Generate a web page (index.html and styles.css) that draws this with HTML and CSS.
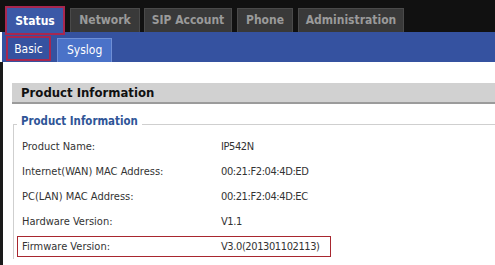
FILE: index.html
```html
<!DOCTYPE html>
<html>
<head>
<meta http-equiv="Content-Type" content="text/html; charset=utf-8">
<title>Status - Basic</title>
<link rel="stylesheet" href="styles.css">
</head>
<body>

<div class="top">
  <a class="tab tab--on">Status</a>
  <a class="tab tab--net">Network</a>
  <a class="tab tab--sip">SIP Account</a>
  <a class="tab tab--phone">Phone</a>
  <a class="tab tab--admin">Administration</a>
</div>

<div class="sub">
  <a class="subtab subtab--on">Basic</a>
  <a class="subtab">Syslog</a>
</div>

<div class="main">
  <p class="main__title">Product Information</p>
  <fieldset class="info">
    <legend class="info__legend">Product Information</legend>
    <div class="info__row"><span class="info__label">Product Name:</span><span class="info__value">IP542N</span></div>
    <div class="info__row"><span class="info__label">Internet(WAN) MAC Address:</span><span class="info__value">00:21:F2:04:4D:ED</span></div>
    <div class="info__row"><span class="info__label">PC(LAN) MAC Address:</span><span class="info__value">00:21:F2:04:4D:EC</span></div>
    <div class="info__row"><span class="info__label">Hardware Version:</span><span class="info__value">V1.1</span></div>
    <div class="info__row info__row--mark"><span class="info__label">Firmware Version:</span><span class="info__value">V3.0(201301102113)</span></div>
  </fieldset>
</div>

</body>
</html>
```

FILE: styles.css
```css
/* reset */
div,p,fieldset,legend{margin:0;padding:0}
a{text-decoration:none}

/* page */
html,body{font-family:"DejaVu Sans Condensed","DejaVu Sans",sans-serif;font-size:12px;}
body{margin:0;background:#fff;overflow:hidden;inline-size:495px;block-size:265px;}

/* top tabs */
.top{display:flex;align-items:flex-end;gap:4px;block-size:32px;padding-inline-start:5px;background:#111;}
.tab{display:block;box-sizing:border-box;block-size:24px;line-height:23px;text-align:center;font-weight:700;font-size:12px;color:#9a9a9a;background:#393939;border:1px solid #4a4a4a;border-bottom:0;}
.tab--on{position:relative;z-index:1;inline-size:60px;block-size:29px;line-height:27px;margin-block-end:-3px;margin-inline-end:1px;color:#fff;background:#3b58a7;border:2px solid #a8274f;}
.tab--net{inline-size:70px;}
.tab--sip{inline-size:88px;}
.tab--phone{inline-size:56px;margin-inline-start:1px;}
.tab--admin{inline-size:106px;margin-inline-start:1px;}

/* sub tabs */
.sub{display:flex;align-items:flex-end;gap:6px;block-size:30px;margin-inline-start:2px;padding-inline-start:4px;background:#3552a0;box-sizing:border-box;}
.subtab{display:block;box-sizing:border-box;block-size:24px;line-height:22px;padding:0 9px;font-size:12px;color:#fff;background:#4a72c8;border:1px solid #6f8fd6;border-bottom:0;}
.subtab--on{block-size:25px;margin-block-end:1px;inline-size:45px;padding:0;text-align:center;background:#3552a0;border:2px solid #a8274f;}

/* content */
.main{box-sizing:border-box;block-size:203px;overflow:hidden;border-inline-start:3px solid #1a1a1a;padding:21px 0 0 9px;}
.main__title{block-size:19px;line-height:20px;padding-inline-start:9px;font-size:13px;font-weight:700;color:#111;background:#d1d1d1;border-bottom:2px solid #9b9b9b;}

.info{margin:10px -10px 0 1px;padding:0 0 0 3px;border:1px solid #cfcfcf;border-right:0;border-bottom:0;}
.info__legend{padding:0 4px 6px;font-size:11.4px;font-weight:700;color:#2f5597;}
.info__row{display:flex;align-items:center;block-size:25px;padding-inline-start:5px;font-size:11px;color:#333;}
.info__label{flex-shrink:0;inline-size:199px;}
.info__value{white-space:nowrap;letter-spacing:-.4px;}
.info__row--mark{box-sizing:border-box;inline-size:314px;block-size:21px;margin:2px 0;padding-inline-start:4px;border:1px solid #a8272f;}
```
